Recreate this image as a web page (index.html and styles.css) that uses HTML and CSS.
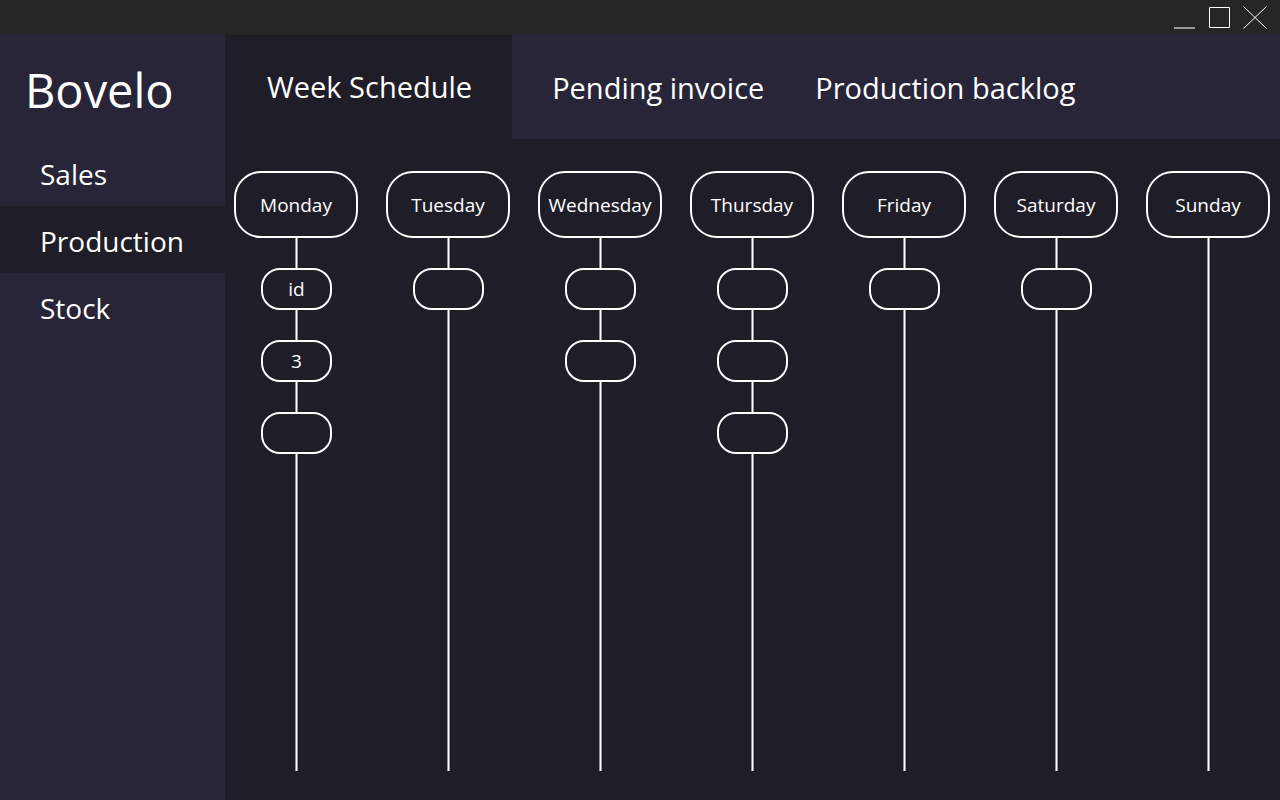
FILE: index.html
```html
<!DOCTYPE html>
<html lang="en">
<head>
<meta charset="utf-8">
<title>Bovelo</title>
<link rel="stylesheet" href="styles.css">
</head>
<body>
<header class="titlebar">
  <button class="win-btn" type="button" aria-label="Minimize"><svg width="24" height="24" viewBox="0 0 24 24"><path d="M1 22h21" stroke="#999" stroke-width="2"/></svg></button>
  <button class="win-btn" type="button" aria-label="Maximize"><svg width="24" height="24" viewBox="0 0 24 24"><path d="M1.5 1.5h20v20h-20z" stroke="#fff" fill="none"/></svg></button>
  <button class="win-btn" type="button" aria-label="Close"><svg width="24" height="24" viewBox="0 0 24 24"><path d="M.5 .5l23 22M23.500 .5l-23 22" stroke="#fff"/></svg></button>
</header>
<div class="app">
  <aside class="sidebar">
    <h1 class="brand">Bovelo</h1>
    <nav class="menu">
      <a class="menu-item" href="#sales">Sales</a>
      <a class="menu-item active" href="#production" aria-current="page">Production</a>
      <a class="menu-item" href="#stock">Stock</a>
    </nav>
  </aside>
  <main class="main">
    <div class="tabs" role="tablist">
      <button class="tab active" type="button" role="tab" aria-selected="true">Week Schedule</button>
      <button class="tab" type="button" role="tab" aria-selected="false">Pending invoice</button>
      <button class="tab" type="button" role="tab" aria-selected="false">Production backlog</button>
    </div>
    <div class="week">
      <section class="day">
        <h2 class="day-name">Monday</h2>
        <div class="track"><div class="slot">id</div><div class="slot">3</div><div class="slot"></div></div>
      </section>
      <section class="day">
        <h2 class="day-name">Tuesday</h2>
        <div class="track"><div class="slot"></div></div>
      </section>
      <section class="day">
        <h2 class="day-name">Wednesday</h2>
        <div class="track"><div class="slot"></div><div class="slot"></div></div>
      </section>
      <section class="day">
        <h2 class="day-name">Thursday</h2>
        <div class="track"><div class="slot"></div><div class="slot"></div><div class="slot"></div></div>
      </section>
      <section class="day">
        <h2 class="day-name">Friday</h2>
        <div class="track"><div class="slot"></div></div>
      </section>
      <section class="day">
        <h2 class="day-name">Saturday</h2>
        <div class="track"><div class="slot"></div></div>
      </section>
      <section class="day">
        <h2 class="day-name">Sunday</h2>
        <div class="track"></div>
      </section>
    </div>
  </main>
</div>
</body>
</html>
```
FILE: styles.css
```css
* {
  box-sizing: border-box;
}

body {
  margin: 0;
  min-height: 100vh;
  display: flex;
  flex-direction: column;
  background: #1f1d27;
  color: #fff;
  font-family: "Segoe UI", "Open Sans", "Noto Sans", sans-serif;
}

button {
  border: 0;
  padding: 0;
  background: none;
  color: inherit;
  font: inherit;
}

.titlebar {
  display: flex;
  justify-content: flex-end;
  align-items: center;
  gap: 11px;
  height: 35px;
  padding-right: 13px;
  background: #262626;
}

.win-btn,
.win-btn svg {
  display: block;
}

.app {
  flex: 1;
  display: flex;
}

.sidebar {
  flex: 0 0 225px;
  background: #282538;
}

.brand {
  margin: 0;
  height: 104px;
  padding: 0 25px;
  font-size: 47px;
  font-weight: 400;
  line-height: 110px;
}

.menu {
  display: flex;
  flex-direction: column;
}

.menu-item {
  padding: 3px 0 0 40px;
  color: inherit;
  font-size: 28px;
  line-height: 64px;
  text-decoration: none;
}

.active {
  background: #1f1d27;
}

.main {
  flex: 1;
  min-width: 0;
  display: flex;
  flex-direction: column;
}

.tabs {
  display: flex;
  background: #282538;
}

.tab {
  padding: 2px 11px 0 40px;
  font-size: 29px;
  line-height: 102px;
}

.tab.active {
  padding: 0 40px 0 42px;
  line-height: 104px;
}

.week {
  flex: 1;
  display: grid;
  grid-template-columns: repeat(7, minmax(0, 1fr));
  gap: 28px;
  padding: 32px 10px 29px 9px;
}

.day {
  display: flex;
  flex-direction: column;
}

.day-name {
  margin: 0;
  padding-top: 2px;
  border: 2px solid #fff;
  border-radius: 27px;
  font-size: 19px;
  font-weight: 400;
  line-height: 61px;
  text-align: center;
}

.track {
  flex: 1;
  display: flex;
  flex-direction: column;
  align-items: center;
  gap: 30px;
  margin-left: 1px;
  padding-top: 30px;
  background: linear-gradient(90deg, #96959a 1px, #fff 1px 2px, #96959a 2px) center / 3px 100% no-repeat;
}

.slot {
  width: 71px;
  height: 42px;
  border: 2px solid #fff;
  border-radius: 19px;
  background: #1f1d27;
  font-size: 19px;
  line-height: 38px;
  text-align: center;
}
```
